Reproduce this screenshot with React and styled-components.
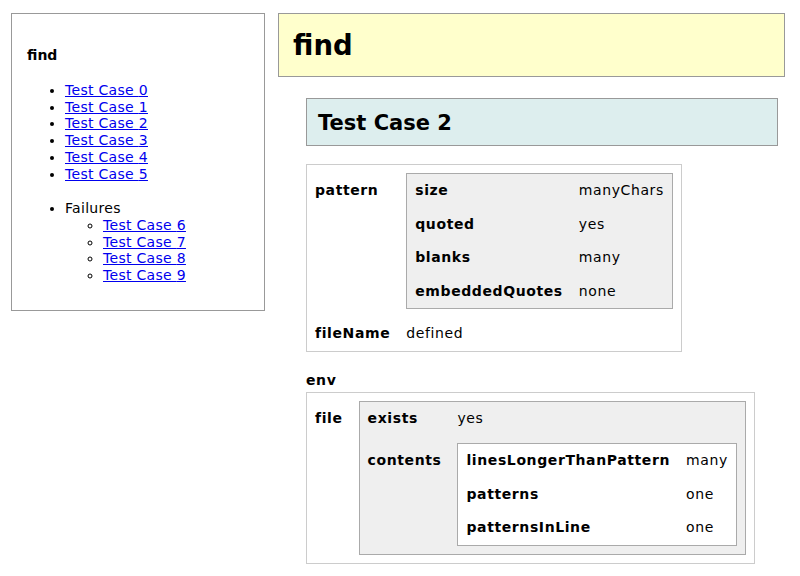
import React from 'react';
import styled, { createGlobalStyle } from 'styled-components';

const GlobalStyle = createGlobalStyle`
  html, body {
    margin: 0;
    padding: 0;
    background: #fff;
  }
  body {
    font-family: "DejaVu Sans", Verdana, sans-serif;
    font-size: 14px;
    line-height: 17px;
    color: #000;
  }
`;

const Page = styled.div`
  display: flex;
  align-items: flex-start;
  gap: 13px;
  padding: 13px 15px 0 11px;
`;

const Sidebar = styled.nav`
  flex: 0 0 254px;
  box-sizing: border-box;
  border: 1px solid #999;
  padding: 16px 16px 10px 15px;
  line-height: 16.7px;
  letter-spacing: 0.3px;
`;

const SideTitle = styled.div`
  font-weight: bold;
  letter-spacing: 0;
  margin: 17px 0 0;
  line-height: 17px;
`;

const List = styled.ul`
  margin: 18px 0 16px;
  padding-left: 38px;
  list-style: ${p => (p.$nested ? 'circle' : 'disc')};

  & & {
    margin: 0;
  }
`;

const Link = styled.a`
  color: #0000ee;
  text-decoration: underline;
`;

const Main = styled.main`
  flex: 1;
  display: flex;
  flex-direction: column;
`;

const Header = styled.h1`
  margin: 0;
  background: #ffffcc;
  border: 1px solid #999;
  padding: 15px 14px 14px;
  font-size: 27.5px;
  line-height: 33px;
  font-weight: bold;
`;

const Content = styled.section`
  margin: 21px 7px 0 28px;
  display: flex;
  flex-direction: column;
  align-items: flex-start;
`;

const CaseTitle = styled.h2`
  align-self: stretch;
  margin: 0 0 18px;
  background: #ddeeee;
  border: 1px solid #999;
  padding: 12px 11px 9px;
  font-size: 21px;
  line-height: 25px;
  font-weight: bold;
`;

const Record = styled.div`
  display: inline-grid;
  grid-template-columns: auto auto;
  align-items: baseline;
  line-height: 17.5px;
  background: ${p => (p.$level % 2 === 1 ? '#efefef' : '#fff')};
  border: 1px solid ${p => (p.$level === 0 ? '#ccc' : '#aaa')};
`;

const Key = styled.div`
  padding: 8px;
  font-weight: bold;
  letter-spacing: 0.6px;
`;

const Value = styled.div`
  padding: 8px;
  letter-spacing: 0.6px;
`;

const SectionLabel = styled.div`
  margin: 20px 0 3px;
  font-weight: bold;
  letter-spacing: 0.6px;
`;

const testCase = {
  pattern: {
    size: 'manyChars',
    quoted: 'yes',
    blanks: 'many',
    embeddedQuotes: 'none',
  },
  fileName: 'defined',
};

const env = {
  file: {
    exists: 'yes',
    contents: {
      linesLongerThanPattern: 'many',
      patterns: 'one',
      patternsInLine: 'one',
    },
  },
};

function RecordView({ data, level = 0 }) {
  return (
    <Record $level={level}>
      {Object.entries(data).map(([key, value]) => (
        <React.Fragment key={key}>
          <Key>{key}</Key>
          <Value>
            {typeof value === 'object'
              ? <RecordView data={value} level={level + 1} />
              : value}
          </Value>
        </React.Fragment>
      ))}
    </Record>
  );
}

const passing = [0, 1, 2, 3, 4, 5];
const failing = [6, 7, 8, 9];

export default function App() {
  return (
    <>
      <GlobalStyle />
      <Page>
        <Sidebar>
          <SideTitle>find</SideTitle>
          <List>
            {passing.map(n => (
              <li key={n}><Link href={`#case-${n}`}>Test Case {n}</Link></li>
            ))}
          </List>
          <List>
            <li>
              Failures
              <List $nested>
                {failing.map(n => (
                  <li key={n}><Link href={`#case-${n}`}>Test Case {n}</Link></li>
                ))}
              </List>
            </li>
          </List>
        </Sidebar>
        <Main>
          <Header>find</Header>
          <Content>
            <CaseTitle>Test Case 2</CaseTitle>
            <RecordView data={testCase} />
            <SectionLabel>env</SectionLabel>
            <RecordView data={env} />
          </Content>
        </Main>
      </Page>
    </>
  );
}
